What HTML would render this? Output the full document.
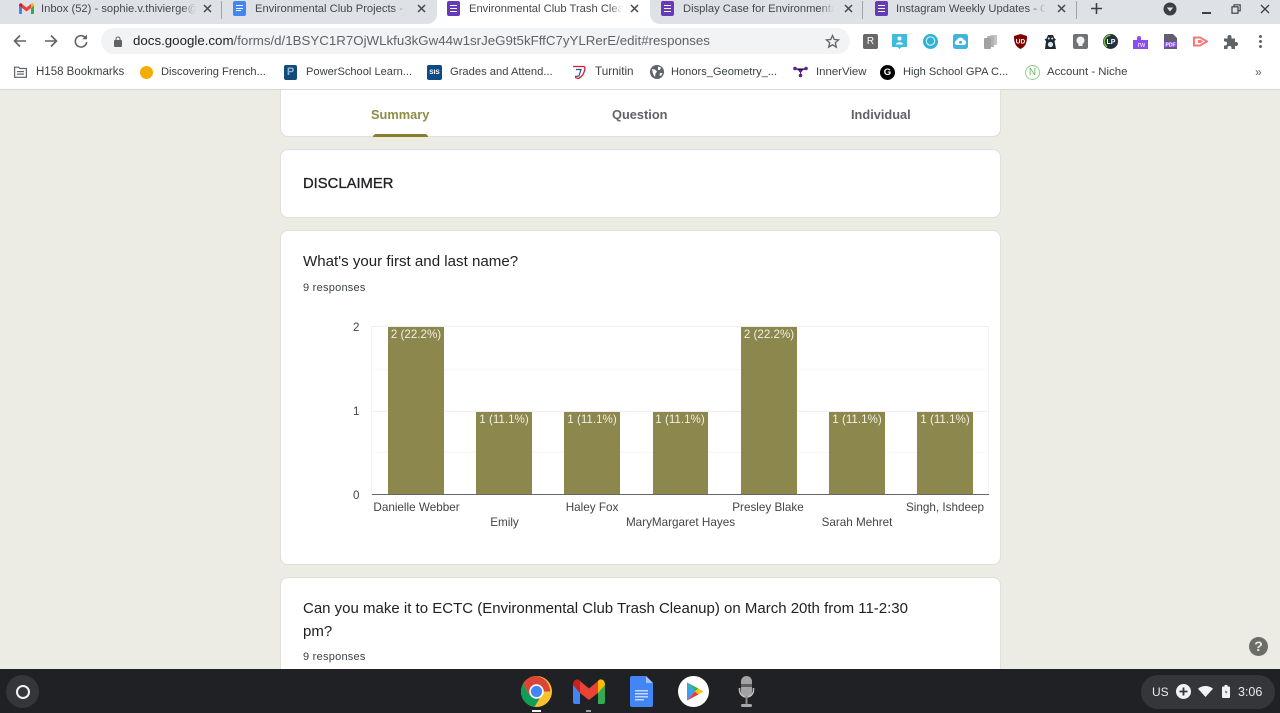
<!DOCTYPE html>
<html><head><meta charset="utf-8">
<style>
html,body{margin:0;padding:0;width:1280px;height:713px;overflow:hidden;background:#ecece4;font-family:"Liberation Sans",sans-serif}
#w{position:absolute;left:0;top:0;width:1280px;height:713px;overflow:hidden;filter:blur(.3px)}
.a{position:absolute}
.t{position:absolute;white-space:nowrap;font-size:11.3px;line-height:14px;color:#45484c}
.tt{top:2px;font-size:11.2px;overflow:hidden;height:14px}
.fade{position:absolute;top:0;width:14px;height:22px;background:linear-gradient(90deg,rgba(222,225,230,0),#dee1e6)}
.sep{position:absolute;top:1px;width:1px;height:18px;background:#a0a3a8}
.fi{position:absolute;top:1px;width:13px;height:15px;border-radius:2px;background:#673ab7}
.fi:after{content:"";position:absolute;left:3px;top:3.5px;width:7px;height:8px;background:repeating-linear-gradient(#fff 0 1px,transparent 1px 3px)}
.card{position:absolute;left:280px;width:719px;background:#fff;border:1px solid #dfdfdb;border-radius:8px;box-sizing:content-box}
.tab{position:absolute;top:107px;font-size:12.8px;line-height:16px;font-weight:bold;color:#5f6368;white-space:nowrap}
.q{position:absolute;left:303px;font-size:15px;line-height:22px;color:#202124;white-space:nowrap}
.r{position:absolute;left:303px;font-size:11px;line-height:14px;color:#3c4043;white-space:nowrap;letter-spacing:.25px}
.bar{position:absolute;width:55.5px;background:#8b874d}
.bl{position:absolute;width:72px;text-align:center;font-size:11.6px;line-height:14px;color:#f1efe3;white-space:nowrap}
.xl{position:absolute;font-size:11.7px;line-height:14px;color:#444;white-space:nowrap;transform:translateX(-50%)}
.yl{position:absolute;left:353px;font-size:11.6px;line-height:14px;color:#444}
.gl{position:absolute;left:372px;width:617px;height:1px;background:#eeeeee}
.gm{position:absolute;left:372px;width:617px;height:1px;background:#f8f8f8}
.ext{position:absolute;top:34px;width:15px;height:15px}
</style></head><body><div id="w">

<!-- tab strip -->
<div class="a" style="left:0;top:0;width:1280px;height:24px;background:#dee1e6"></div>
<div class="a" style="left:0;top:24px;width:1280px;height:36px;background:#fff"></div>
<div class="a" style="left:437px;top:0;width:213px;height:24px;background:#fff"></div>
<div class="a" style="left:422px;top:10px;width:15px;height:14px;background:#fff"></div>
<div class="a" style="left:422px;top:0;width:15px;height:24px;background:#dee1e6;border-bottom-right-radius:10px"></div>
<div class="a" style="left:650px;top:10px;width:15px;height:14px;background:#fff"></div>
<div class="a" style="left:650px;top:0;width:15px;height:24px;background:#dee1e6;border-bottom-left-radius:10px"></div>

<!-- tab 1 -->
<svg class="a" style="left:19px;top:3px" width="15" height="11" viewBox="0 0 15 11"><path d="M0 2v8a1 1 0 0 0 1 1h2V5z" fill="#4285f4"/><path d="M15 2v8a1 1 0 0 1-1 1h-2V5z" fill="#34a853"/><path d="M3 5V1L7.500 4.500 12 1v4L7.500 8.500z" fill="#ea4335"/><path d="M0 2.500C0 .5 2 -.5 3 1v4z" fill="#c5221f"/><path d="M15 2.500C15 .5 13 -.5 12 1v4z" fill="#fbbc04"/></svg>
<div class="t tt" style="left:41px;width:155px">Inbox (52) - sophie.v.thivierge@</div>
<div class="fade" style="left:182px"></div>
<svg class="a" style="left:203px;top:4px" width="9" height="9" viewBox="0 0 9 9"><path d="M1 1l7 7M8 1L1 8" stroke="#45484c" stroke-width="1.500"/></svg>
<div class="sep" style="left:221px"></div>

<!-- tab 2 -->
<div class="a" style="left:233px;top:1px;width:13px;height:15px;background:#4285f4;border-radius:2px"></div>
<div class="a" style="left:236px;top:5px;width:7px;height:1.200px;background:#fff"></div>
<div class="a" style="left:236px;top:7.500px;width:7px;height:1.200px;background:#fff"></div>
<div class="a" style="left:236px;top:10px;width:5px;height:1.200px;background:#fff"></div>
<div class="t tt" style="left:255px;width:152px">Environmental Club Projects - G</div>
<div class="fade" style="left:393px"></div>
<svg class="a" style="left:417px;top:4px" width="9" height="9" viewBox="0 0 9 9"><path d="M1 1l7 7M8 1L1 8" stroke="#45484c" stroke-width="1.500"/></svg>

<!-- tab 3 -->
<div class="fi" style="left:447px"></div>
<div class="t tt" style="left:469px;width:154px">Environmental Club Trash Clean</div>
<div class="a" style="left:609px;top:0;width:14px;height:22px;background:linear-gradient(90deg,rgba(255,255,255,0),#fff)"></div>
<svg class="a" style="left:630px;top:4px" width="9" height="9" viewBox="0 0 9 9"><path d="M1 1l7 7M8 1L1 8" stroke="#45484c" stroke-width="1.500"/></svg>

<!-- tab 4 -->
<div class="fi" style="left:661px"></div>
<div class="t tt" style="left:683px;width:151px">Display Case for Environmental</div>
<div class="fade" style="left:820px"></div>
<svg class="a" style="left:844px;top:4px" width="9" height="9" viewBox="0 0 9 9"><path d="M1 1l7 7M8 1L1 8" stroke="#45484c" stroke-width="1.500"/></svg>
<div class="sep" style="left:862px"></div>

<!-- tab 5 -->
<div class="fi" style="left:875px"></div>
<div class="t tt" style="left:896px;width:150px">Instagram Weekly Updates - Goo</div>
<div class="fade" style="left:1032px"></div>
<svg class="a" style="left:1057px;top:4px" width="9" height="9" viewBox="0 0 9 9"><path d="M1 1l7 7M8 1L1 8" stroke="#45484c" stroke-width="1.500"/></svg>
<div class="sep" style="left:1076px"></div>

<!-- new tab & window controls -->
<svg class="a" style="left:1090px;top:2px" width="13" height="13" viewBox="0 0 13 13"><path d="M6.500 1v11M1 6.500h11" stroke="#3c4043" stroke-width="1.600"/></svg>
<svg class="a" style="left:1163px;top:2px" width="14" height="14" viewBox="0 0 14 14"><circle cx="7" cy="7" r="6.500" fill="#3c4043"/><path d="M3.800 5.500h6.400L7 9.500z" fill="#dee1e6"/></svg>
<div class="a" style="left:1202px;top:12px;width:9px;height:1.500px;background:#3c4043"></div>
<svg class="a" style="left:1231px;top:4px" width="10" height="10" viewBox="0 0 10 10"><path d="M3 2.500V.8h6.200v6H7.500" fill="none" stroke="#3c4043" stroke-width="1.100"/><rect x="1" y="2.800" width="6" height="6.400" fill="none" stroke="#3c4043" stroke-width="1.200"/></svg>
<svg class="a" style="left:1260px;top:4px" width="10" height="10" viewBox="0 0 10 10"><path d="M1 1l8 8M9 1L1 9" stroke="#3c4043" stroke-width="1.300"/></svg>

<!-- toolbar -->
<svg class="a" style="left:13px;top:34px" width="14" height="14" viewBox="0 0 14 14"><path d="M13 7H2M7 1.500L1.500 7 7 12.500" fill="none" stroke="#5f6368" stroke-width="1.600"/></svg>
<svg class="a" style="left:44px;top:34px" width="14" height="14" viewBox="0 0 14 14"><path d="M1 7h11M7 1.500L12.500 7 7 12.500" fill="none" stroke="#5f6368" stroke-width="1.600"/></svg>
<svg class="a" style="left:73px;top:33px" width="16" height="16" viewBox="0 0 16 16"><path d="M12.800 5.200A5.700 5.700 0 1 0 13.700 9" fill="none" stroke="#5f6368" stroke-width="1.600"/><path d="M14 1.500V6.300H9.200z" fill="#5f6368"/></svg>
<div class="a" style="left:101px;top:28px;width:749px;height:26px;background:#f1f3f4;border-radius:13px"></div>
<svg class="a" style="left:114px;top:36px" width="8" height="11" viewBox="0 0 8 11"><rect x="0" y="4" width="8" height="7" rx="1" fill="#5f6368"/><path d="M2 4.500V3a2 2 0 0 1 4 0v1.500" fill="none" stroke="#5f6368" stroke-width="1.100"/></svg>
<div class="t" style="left:133px;top:33px;font-size:13.3px;line-height:16px;color:#5f6368"><span style="color:#202124">docs.google.com</span>/forms/d/1BSYC1R7OjWLkfu3kGw44w1srJeG9t5kFffC7yYLRerE/edit#responses</div>
<svg class="a" style="left:825px;top:34px" width="15" height="15" viewBox="0 0 15 15"><path d="M7.500 1.500l1.800 4 4.300.4-3.300 2.900 1 4.300-3.800-2.300-3.800 2.300 1-4.300L1.400 5.900l4.300-.4z" fill="none" stroke="#5f6368" stroke-width="1.300"/></svg>

<!-- extensions -->
<div class="ext" style="left:863px;background:#686868;border-radius:2px;color:#fff;font-size:10px;line-height:15px;text-align:center">R</div>
<svg class="ext" style="left:892px" viewBox="0 0 15 15"><path d="M0 0h15v13H9.500L7.500 15 5.500 13H0z" fill="#3fbcdc"/><circle cx="7.500" cy="4.500" r="2" fill="#fff"/><path d="M4 10.500c0-3 7-3 7 0z" fill="#fff"/></svg>
<svg class="ext" style="left:923px" viewBox="0 0 15 15"><circle cx="7.500" cy="7.500" r="7.500" fill="#2fb3d3"/><circle cx="7.500" cy="7" r="4.200" fill="none" stroke="#cdeef6" stroke-width="1.200"/></svg>
<svg class="ext" style="left:953px" viewBox="0 0 15 15"><rect width="15" height="15" rx="2.500" fill="#3fb4dd"/><path d="M4 11a2.300 2.300 0 0 1 0-4.600 3.500 3.500 0 0 1 6.700-.5 2.600 2.600 0 0 1 .3 5.100z" fill="#fff"/><circle cx="7.500" cy="8.200" r="1.500" fill="#3fb4dd"/></svg>
<svg class="ext" style="left:983px" viewBox="0 0 15 15"><rect x="7" y="1" width="7" height="10" rx="1" fill="#c4c4c4"/><rect x="4" y="2" width="7" height="11" rx="1" fill="#b2b2b2"/><rect x="1" y="4" width="7" height="11" rx="1" fill="#a2a2a2"/></svg>
<svg class="ext" style="left:1013px" viewBox="0 0 15 15"><path d="M7.500 0L14 2c0 6 -1 10.500-6.500 13C2 12.500 1 8 1 2z" fill="#800000"/><text x="7.500" y="9.500" font-size="6.500" font-weight="bold" fill="#fff" text-anchor="middle" font-family="Liberation Sans">UD</text></svg>
<svg class="ext" style="left:1043px" viewBox="0 0 15 15"><path d="M3.500 4.500L5 1h5l1.500 3.500 1.500 1-1.500 1.500L13 15H2l1-8-1.500-1.500z" fill="#1d2a33"/><circle cx="7.500" cy="10.500" r="2.600" fill="#dfe5e8"/><circle cx="5.800" cy="4.500" r="1" fill="#dfe5e8"/><circle cx="9.200" cy="4.500" r="1" fill="#dfe5e8"/></svg>
<svg class="ext" style="left:1073px" viewBox="0 0 15 15"><rect width="15" height="15" rx="2" fill="#6d7377"/><circle cx="7.500" cy="6.500" r="4" fill="#f3f3f3"/><rect x="5.500" y="9.500" width="4" height="2.500" fill="#f3f3f3"/></svg>
<svg class="ext" style="left:1103px" viewBox="0 0 15 15"><circle cx="7.500" cy="7.500" r="7.500" fill="#20333c"/><path d="M7.500 1.200A6.300 6.300 0 0 0 4 12.700" fill="none" stroke="#79c142" stroke-width="1.500"/><text x="8" y="10.200" font-size="7" font-weight="bold" fill="#fff" text-anchor="middle" font-family="Liberation Sans">LP</text></svg>
<svg class="ext" style="left:1133px" viewBox="0 0 15 15"><path d="M0 6h4V4a2 2 0 0 1 4 0v2h7v9H0z" fill="#8a4df3"/><text x="8.500" y="13" font-size="7" fill="#fff" text-anchor="middle" font-family="Liberation Sans">rw</text></svg>
<svg class="ext" style="left:1163px" viewBox="0 0 15 15"><path d="M1 0h9l4 4v11H1z" fill="#5f5f70"/><rect x="1" y="8" width="13" height="5" fill="#8a4df3"/><text x="7.500" y="12.300" font-size="5" font-weight="bold" fill="#fff" text-anchor="middle" font-family="Liberation Sans">PDF</text></svg>
<svg class="ext" style="left:1193px" viewBox="0 0 15 15"><path d="M1 3.500h6L14 7.500 7 11.500H1z" fill="none" stroke="#f47a7a" stroke-width="2"/><path d="M5 6h3l2 1.500-2 1.500H5z" fill="#f47a7a"/></svg>
<svg class="ext" style="left:1223px" viewBox="0 0 15 15"><path d="M1 4.500h3.500V3a2 2 0 0 1 4 0v1.500H12V8h1a2 2 0 0 1 0 4h-1v3H8.500v-1a2 2 0 0 0-4 0v1H1v-3.500h1a2 2 0 0 0 0-4H1z" fill="#5f6368"/></svg>
<svg class="ext" style="left:1253px" viewBox="0 0 15 15"><circle cx="7.500" cy="2.500" r="1.500" fill="#5f6368"/><circle cx="7.500" cy="7.500" r="1.500" fill="#5f6368"/><circle cx="7.500" cy="12.500" r="1.500" fill="#5f6368"/></svg>

<!-- bookmarks bar -->
<div class="a" style="left:0;top:60px;width:1280px;height:29px;background:#fff"></div>
<div class="a" style="left:0;top:89px;width:1280px;height:1px;background:#d8d8d8"></div>
<svg class="a" style="left:14px;top:66px" width="13" height="12" viewBox="0 0 13 12"><path d="M.6 1.200h4l1.200 1.300h6.600v8.800H.6z" fill="none" stroke="#5f6368" stroke-width="1.200"/><rect x="3" y="5" width="7" height="1.200" fill="#5f6368"/><rect x="3" y="7.500" width="7" height="1.200" fill="#5f6368"/></svg>
<div class="t" style="left:36px;top:65px;color:#3c4043;font-size:11.5px">H158 Bookmarks</div>
<div class="a" style="left:140px;top:66px;width:13px;height:13px;border-radius:50%;background:#f5ad05"></div>
<div class="t" style="left:161px;top:65px;color:#3c4043;font-size:11.1px">Discovering French...</div>
<div class="a" style="left:284px;top:65px;width:13px;height:15px;border-radius:2px;background:#134a7c;color:#8fb4d2;font-size:11px;line-height:15px;text-align:center;font-weight:bold">P</div>
<div class="t" style="left:306px;top:65px;color:#3c4043;font-size:11.1px">PowerSchool Learn...</div>
<div class="a" style="left:427px;top:65px;width:15px;height:15px;border-radius:2px;background:#0e4a85;color:#fff;font-size:6.500px;line-height:15px;text-align:center;font-weight:bold">SIS</div>
<div class="t" style="left:450px;top:65px;color:#3c4043;font-size:11.2px">Grades and Attend...</div>
<svg class="a" style="left:571px;top:64px" width="16" height="16" viewBox="0 0 16 16"><path d="M2 2.500h11l1 1c-.5 5-2.500 9.500-7 11l-3-1" fill="none" stroke="#d9202b" stroke-width="1.300"/><path d="M5 5.500h5L8 12l-4 .5" fill="none" stroke="#2a4f9e" stroke-width="1.200"/></svg>
<div class="t" style="left:595px;top:65px;color:#3c4043;font-size:11.7px">Turnitin</div>
<svg class="a" style="left:650px;top:65px" width="14" height="14" viewBox="0 0 14 14"><circle cx="7" cy="7" r="7" fill="#5f6368"/><path d="M2 4l3 .5 2 2-1.500 2L5 12 3 9zM8 1.500l3 1-1 2.500H8zM10 8h2.500l-1.500 3-1.500-.5z" fill="#fff"/></svg>
<div class="t" style="left:671px;top:65px;color:#3c4043;font-size:11.1px">Honors_Geometry_...</div>
<svg class="a" style="left:793px;top:65px" width="15" height="14" viewBox="0 0 15 14"><path d="M2 3.500L7.500 6 13 3.500M7.500 6v4" stroke="#5f1e91" stroke-width="1"/><circle cx="2" cy="3.500" r="1.800" fill="#5f1e91"/><circle cx="13" cy="3.500" r="1.800" fill="#5f1e91"/><circle cx="7.500" cy="6" r="1.500" fill="#5f1e91"/><circle cx="7.500" cy="10.500" r="1.800" fill="#5f1e91"/></svg>
<div class="t" style="left:816px;top:65px;color:#3c4043;font-size:11.4px">InnerView</div>
<div class="a" style="left:880px;top:65px;width:15px;height:15px;border-radius:50%;background:#000;color:#fff;font-size:9.500px;line-height:15px;text-align:center;font-weight:bold">G</div>
<div class="t" style="left:903px;top:65px;color:#3c4043;font-size:11.1px">High School GPA C...</div>
<div class="a" style="left:1025px;top:65px;width:13px;height:13px;border-radius:50%;border:1px solid #8fd18a;color:#62b85b;font-size:10px;line-height:13px;text-align:center">N</div>
<div class="t" style="left:1047px;top:65px;color:#3c4043;font-size:11.4px">Account - Niche</div>
<div class="t" style="left:1255px;top:65px;color:#5f6368;font-size:12px">»</div>

<!-- page -->
<div class="a" style="left:0;top:90px;width:1280px;height:579px;background:#ecece4"></div>
<div class="card" style="top:90px;height:46px;border-top:none;border-radius:0 0 8px 8px"></div>
<div class="tab" style="left:371px;color:#8f8c46">Summary</div>
<div class="tab" style="left:612px">Question</div>
<div class="tab" style="left:851px">Individual</div>
<div class="a" style="left:373px;top:134px;width:55px;height:3px;background:#857f2c;border-radius:3px 3px 0 0"></div>

<div class="card" style="top:149px;height:67px"></div>
<div class="a" style="left:303px;top:175px;font-size:14.800px;line-height:18px;color:#202124;-webkit-text-stroke:.3px #202124">DISCLAIMER</div>

<div class="card" style="top:230px;height:333px"></div>
<div class="q" style="top:249px;font-size:15.1px;top:251px">What's your first and last name?</div>
<div class="r" style="top:281px">9 responses</div>

<!-- chart -->
<div class="gl" style="top:326px"></div>
<div class="gm" style="top:369px"></div>
<div class="gl" style="top:411px"></div>
<div class="gm" style="top:452px"></div>
<div class="a" style="left:371px;top:326px;width:1px;height:169px;background:#f4f4f4"></div>
<div class="a" style="left:988px;top:326px;width:1px;height:169px;background:#f4f4f4"></div>
<div class="yl" style="top:321px">2</div>
<div class="yl" style="top:405px">1</div>
<div class="yl" style="top:489px">0</div>

<div class="bar" style="left:388px;top:327px;height:168px"></div>
<div class="bar" style="left:476px;top:412px;height:83px"></div>
<div class="bar" style="left:564px;top:412px;height:83px"></div>
<div class="bar" style="left:652.500px;top:412px;height:83px"></div>
<div class="bar" style="left:741px;top:327px;height:168px"></div>
<div class="bar" style="left:829px;top:412px;height:83px"></div>
<div class="bar" style="left:917px;top:412px;height:83px"></div>
<div class="a" style="left:372px;top:494px;width:617px;height:1px;background:#666"></div>

<div class="bl" style="left:380px;top:328px">2 (22.2%)</div>
<div class="bl" style="left:468px;top:413px">1 (11.1%)</div>
<div class="bl" style="left:556px;top:413px">1 (11.1%)</div>
<div class="bl" style="left:644px;top:413px">1 (11.1%)</div>
<div class="bl" style="left:733px;top:328px">2 (22.2%)</div>
<div class="bl" style="left:821px;top:413px">1 (11.1%)</div>
<div class="bl" style="left:909px;top:413px">1 (11.1%)</div>

<div class="xl" style="left:416.500px;top:501px">Danielle Webber</div>
<div class="xl" style="left:504.500px;top:516px">Emily</div>
<div class="xl" style="left:592px;top:501px">Haley Fox</div>
<div class="xl" style="left:680.500px;top:516px">MaryMargaret Hayes</div>
<div class="xl" style="left:768px;top:501px">Presley Blake</div>
<div class="xl" style="left:857px;top:516px">Sarah Mehret</div>
<div class="xl" style="left:945px;top:501px">Singh, Ishdeep</div>

<div class="card" style="top:577px;height:120px"></div>
<div class="q" style="top:598px">Can you make it to ECTC (Environmental Club Trash Cleanup) on March 20th from 11-2:30</div>
<div class="q" style="top:621px">pm?</div>
<div class="r" style="top:650px">9 responses</div>

<div class="a" style="left:1249px;top:637px;width:19px;height:19px;border-radius:50%;background:#6d6d68;color:#ecece4;font-size:14px;line-height:19px;text-align:center;font-weight:bold">?</div>

<!-- shelf -->
<div class="a" style="left:0;top:669px;width:1280px;height:44px;background:#202124"></div>
<div class="a" style="left:6px;top:675px;width:33px;height:33px;border-radius:50%;background:#35363a"></div>
<div class="a" style="left:16px;top:685px;width:10px;height:10px;border-radius:50%;border:2px solid #f1f3f4"></div>

<svg class="a" style="left:521px;top:676px" width="31" height="31" viewBox="0 0 32 32"><circle cx="16" cy="16" r="16" fill="#fbc02d"/><path d="M16 0A16 16 0 0 0 2.100 8L9 20l7-4h14A16 16 0 0 0 16 0z" fill="#db4437"/><path d="M2.100 8A16 16 0 0 0 14 31.900L21 20l-5-4-7 4z" fill="#0f9d58"/><circle cx="16" cy="16" r="7.500" fill="#fff"/><circle cx="16" cy="16" r="5.800" fill="#4285f4"/></svg>
<div class="a" style="left:532px;top:710px;width:9px;height:2px;background:#f1f3f4"></div>

<svg class="a" style="left:573px;top:679px" width="32" height="25" viewBox="0 0 32 25"><path d="M0 5v18a2 2 0 0 0 2 2h5V10z" fill="#4285f4"/><path d="M32 5v18a2 2 0 0 1-2 2h-5V10z" fill="#34a853"/><path d="M7 14V2l9 7.500L25 2v12l-9 7z" fill="#ea4335"/><path d="M0 6C0 0 5-1 7 2v12z" fill="#c5221f"/><path d="M32 6c0-6-5-7-7-4v12z" fill="#fbbc04"/></svg>
<div class="a" style="left:586px;top:710px;width:5px;height:2px;background:#9aa0a6"></div>

<svg class="a" style="left:630px;top:676px" width="23" height="31" viewBox="0 0 23 31"><path d="M2 0h14l7 7v22a2 2 0 0 1-2 2H2a2 2 0 0 1-2-2V2a2 2 0 0 1 2-2z" fill="#4285f4"/><path d="M16 0l7 7h-7z" fill="#a1c2fa"/><path d="M5 14h13v1.500H5zM5 17h13v1.500H5zM5 20h13v1.500H5zM5 23h9v1.500H5z" fill="#c5d8fb"/></svg>

<svg class="a" style="left:678px;top:676px" width="31" height="31" viewBox="0 0 31 31"><circle cx="15.500" cy="15.500" r="15.500" fill="#fff"/><path d="M9 6.500l8 9-8 9z" fill="#3f9fee"/><path d="M9 6.500l11.500 6-3.500 3z" fill="#2fb163"/><path d="M9 24.500l11.500-6-3.500-3z" fill="#e9383f"/><path d="M20.500 12.500l5 3-5 3-3.500-3z" fill="#fcc419"/></svg>

<svg class="a" style="left:738px;top:675px" width="17" height="33" viewBox="0 0 17 33"><rect x="3" y="1" width="11" height="21" rx="5.500" fill="#a3a3a3"/><rect x="3" y="9" width="11" height="3" fill="#5e5e5e"/><path d="M1.500 13v2a7 7 0 0 0 14 0v-2" fill="none" stroke="#c4c4c4" stroke-width="1.500"/><rect x="7.500" y="21" width="2" height="8" fill="#8a8a8a"/><rect x="3" y="29" width="11" height="3" rx="1.500" fill="#a8a8a8"/></svg>

<div class="a" style="left:1141px;top:675px;width:134px;height:34px;border-radius:17px;background:#35363a"></div>
<div class="a" style="left:1152px;top:685px;font-size:12px;line-height:15px;color:#e8eaed">US</div>
<svg class="a" style="left:1176px;top:684px" width="15" height="15" viewBox="0 0 15 15"><circle cx="7.500" cy="7.500" r="7.500" fill="#f1f3f4"/><path d="M7.500 3.500v8M3.500 7.500h8" stroke="#35363a" stroke-width="1.800"/></svg>
<svg class="a" style="left:1198px;top:686px" width="15" height="11" viewBox="0 0 15 11"><path d="M0 2.800C4-.9 11-.9 15 2.800L7.500 11z" fill="#f1f3f4"/></svg>
<svg class="a" style="left:1222px;top:685px" width="8" height="13" viewBox="0 0 8 13"><rect x="2.500" y="0" width="3" height="2" fill="#f1f3f4"/><rect x="0" y="1.500" width="8" height="11.500" rx="1" fill="#f1f3f4"/><path d="M4.500 3.500L2.800 7.500h2L3.500 11l2-4.500h-2z" fill="#35363a"/></svg>
<div class="a" style="left:1238px;top:685px;font-size:12.500px;line-height:15px;color:#e8eaed">3:06</div>
</div></body></html>
